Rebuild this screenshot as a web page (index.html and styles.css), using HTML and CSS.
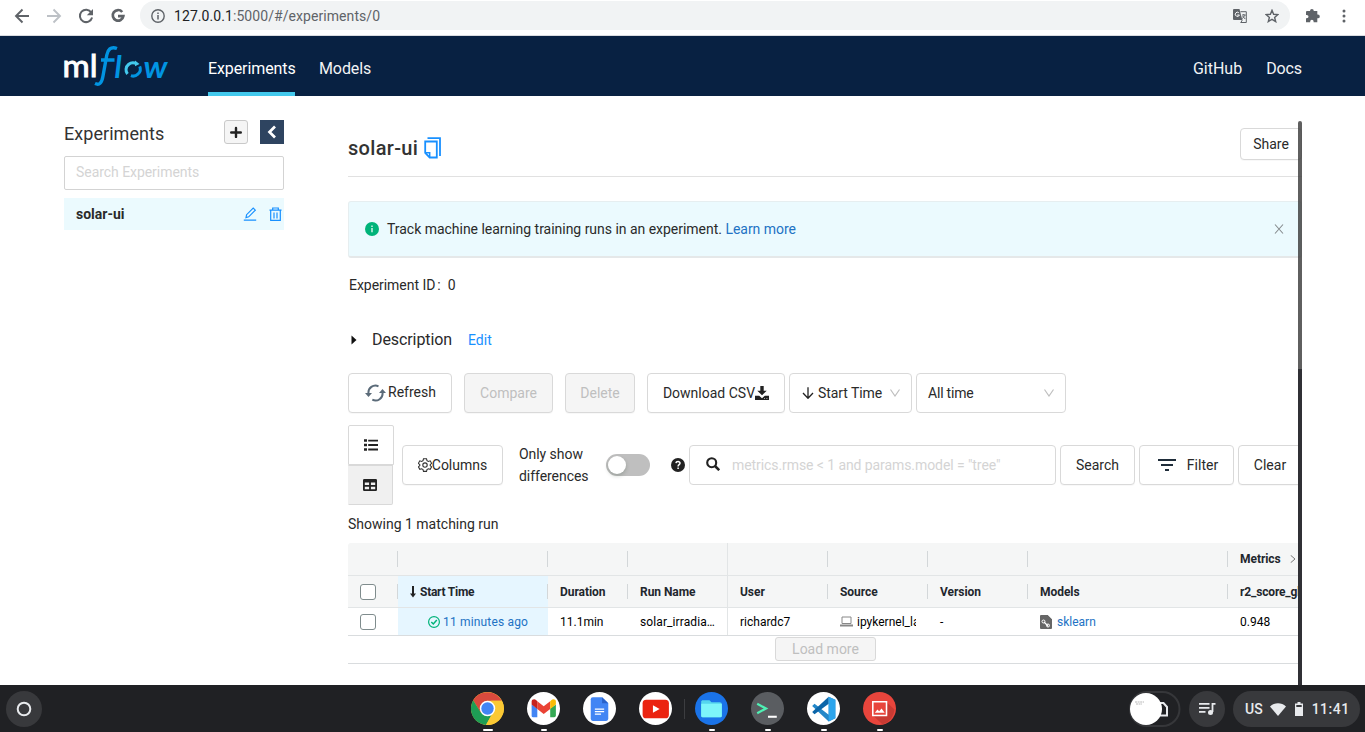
FILE: index.html
```html
<!DOCTYPE html>
<html lang="en">
<head>
<meta charset="utf-8">
<title>MLflow</title>
<link rel="stylesheet" href="styles.css">
</head>
<body>
<div class="browser">
  <svg class="ic" width="16" height="16" viewBox="0 0 16 16" fill="none" stroke="#5f6368" stroke-width="1.900"><path d="M15 8H2.500M8.500 1.500L2 8l6.500 6.500"/></svg>
  <svg class="ic" width="16" height="16" viewBox="0 0 16 16" fill="none" stroke="#bdc1c6" stroke-width="1.900"><path d="M1 8h12.500M7.500 1.500L14 8l-6.500 6.500"/></svg>
  <svg class="ic" width="16" height="16" viewBox="0 0 16 16"><path fill="none" stroke="#5f6368" stroke-width="2" d="M13.300 4.500A6.200 6.200 0 1 0 14.100 9.500"/><path fill="#5f6368" d="M15 1v6.200H8.800z"/></svg>
  <svg class="ic" width="16" height="16" viewBox="0 0 16 16" fill="none" stroke="#5f6368" stroke-width="2.700"><path d="M12.200 4A5.300 5.300 0 1 0 13.300 8.200H8"/></svg>
  <div class="omnibox">
    <svg width="14" height="14" viewBox="0 0 14 14"><circle cx="7" cy="7" r="6.200" fill="none" stroke="#5f6368" stroke-width="1.400"/><path d="M7 6v4.500M7 3.400v1.500" stroke="#5f6368" stroke-width="1.500"/></svg>
    <span class="url"><b>127.0.0.1</b>:5000/#/experiments/0</span>
    <svg width="14" height="14" viewBox="0 0 14 14"><path fill="#5f6368" d="M1 0h5.500l2.800 11H1a1 1 0 0 1-1-1V1a1 1 0 0 1 1-1z"/><path fill="none" stroke="#5f6368" d="M7.500 2.700h5.800v10.800H7.500M8 13.300l1.400-2.500"/><path fill="none" stroke="#fff" d="M5.800 3.700A2.100 2.100 0 1 0 6.400 6H4.300"/><path fill="none" stroke="#5f6368" d="M9 6h3.700M10.800 5v1M12 6.200L9.300 9.700M9.600 7l2.600 3"/></svg>
    <svg class="star" width="14" height="14" viewBox="0 0 14 14"><path fill="none" stroke="#5f6368" stroke-width="1.400" d="M7 1.300l1.600 4 4.300.3-3.300 2.800 1.100 4.200L7 10.300l-3.700 2.300 1.100-4.200L1.100 5.600l4.300-.3z"/></svg>
  </div>
  <svg class="puzzle" width="15" height="15" viewBox="0 0 15 15"><path fill="#5f6368" d="M1.500 3H5a1.900 1.900 0 1 1 3.800 0h3.500v3.500h.6a1.900 1.900 0 1 1 0 3.800h-.6v3.900H8.600v-.8a1.700 1.700 0 0 0-3.400 0v.8H1v-3.900h.8a1.700 1.700 0 0 0 0-3.400H1V4z"/></svg>
  <svg class="dots" width="4" height="14" viewBox="0 0 4 14" fill="#5f6368"><circle cx="2" cy="2" r="1.500"/><circle cx="2" cy="7" r="1.500"/><circle cx="2" cy="12" r="1.500"/></svg>
</div>

<header class="top">
  <svg class="logo" width="106" height="42" viewBox="0 0 106 42">
    <text class="ml" x="-1.500" y="32.300" textLength="35" lengthAdjust="spacingAndGlyphs">ml</text>
    <path fill="none" stroke="#0194e2" stroke-width="3.400" d="M53 3.500C46.500 1 43.800 5 42.800 10L39 31c-1.200 7-3.500 9.500-8 7.500M37 15h13.500"/>
    <text class="fl" x="50.500" y="32.500">l</text>
    <text class="fl" x="79.500" y="32.500" textLength="24" lengthAdjust="spacingAndGlyphs">w</text>
    <path fill="none" stroke="#43c9ed" stroke-width="3" d="M63.500 29a6.800 6.800 0 0 1 1-9.500 7 7 0 0 1 8-.7"/>
    <path fill="#43c9ed" d="M71 15.500l4.500 3.500-4.500 2.300z"/>
    <path fill="none" stroke="#0194e2" stroke-width="3" d="M75.700 21.300a6.800 6.800 0 0 1-1.800 7.900 7 7 0 0 1-7 1.500"/>
  </svg>
  <a class="nav active">Experiments</a>
  <a class="nav models">Models</a>
  <a class="nav gh">GitHub</a>
  <a class="nav docs">Docs</a>
</header>

<main class="main">
  <aside class="side">
    <div class="side-head">
      <h2>Experiments</h2>
      <span class="plus"><svg width="12" height="12" viewBox="0 0 12 12" stroke="#222" stroke-width="2.400" stroke-linecap="round"><path d="M6 2v9M1.200 6.500h9.600"/></svg></span>
      <span class="collapse"><svg width="10" height="14" viewBox="0 0 10 14" fill="none" stroke="#fff" stroke-width="2.700"><path d="M8 1.500L2.500 7 8 12.500"/></svg></span>
    </div>
    <div class="side-search">Search Experiments</div>
    <div class="side-item"><b>solar-ui</b>
      <svg width="14" height="14" viewBox="0 0 14 14" fill="none" stroke="#1890ff" stroke-width="1.200"><path d="M.8 13.200h12.400M3 10.600l.6-2.900 6.600-6.600 2.100 2.100-6.600 6.600z"/></svg>
      <svg class="trash" width="14" height="14" viewBox="0 0 14 14" fill="none" stroke="#1890ff" stroke-width="1.200"><path d="M.5 3.200h12M3.700 3V1h5.600v2M1.700 3.500v9.900h9.600V3.500M5 5.500v6M8 5.500v6"/></svg>
    </div>
  </aside>

  <section class="content">
    <div class="title-row">
      <h1>solar-ui</h1>
      <svg width="18" height="22" viewBox="0 0 18 22" fill="none" stroke="#1890ff" stroke-width="1.800"><path d="M3.500 1.200H16V19M1.200 4.500h11.600v16H5.700L1.200 16z"/><path stroke-width="1.500" d="M1.200 15.700h4.500v4.500"/></svg>
      <span class="btn share">Share</span>
    </div>

    <div class="alert">
      <svg width="14" height="14" viewBox="0 0 14 14"><circle cx="7" cy="7" r="7" fill="#00b379"/><path d="M7 6v4.300M7 3.600v1.400" stroke="#fff" stroke-width="1.200"/></svg>
      <span class="alert-text">Track machine learning training runs in an experiment. <a>Learn more</a></span>
      <svg class="close" width="10" height="10" viewBox="0 0 10 10" stroke="#858a8d" stroke-width="1.100"><path d="M1 .5l8 9M9 .5l-8 9"/></svg>
    </div>

    <div class="exp-id">Experiment ID<i>:</i>0</div>

    <div class="desc">
      <svg width="6" height="10" viewBox="0 0 6 10"><path d="M.5 .5L5.500 5l-5 4.500z" fill="#111"/></svg>
      <span class="desc-t">Description</span><a>Edit</a>
    </div>

    <div class="tools">
      <span class="btn big refresh"><svg width="21" height="18" viewBox="0 0 21 18" fill="none" stroke="#5b6b79" stroke-width="2"><path d="M3.500 9.500A7 7 0 0 1 13.500 2.300M17.500 8.500A7 7 0 0 1 7.300 15.700"/><path fill="#5b6b79" stroke="none" d="M0 9h7l-3.500 4zM14 9h7l-3.500-4z"/></svg>Refresh</span>
      <span class="btn big off compare">Compare</span>
      <span class="btn big off delete">Delete</span>
      <span class="btn big csv">Download CSV<svg width="14" height="14" viewBox="0 0 14 14" fill="#222"><path d="M5.300 0h3.400v4.800h3L7 9.300 2.300 4.800h3zM0 9.800h4.200L7 12.200l2.800-2.400H14V14H0z"/><path fill="#fff" d="M9.200 12.200h.8v.8h-.8zM11.500 12.200h.8v.8h-.8z"/></svg></span>
      <span class="sel sort"><svg width="12" height="12" viewBox="0 0 12 12" fill="none" stroke="#222" stroke-width="1.300"><path d="M6 .3v11M1 6l5 5.300L11 6"/></svg>Start Time<svg class="chev" width="10" height="8" viewBox="0 0 10 8" fill="none" stroke="#bfbfbf" stroke-width="1.200"><path d="M.5 .5L5 7 9.500.5"/></svg></span>
      <span class="sel time">All time<svg class="chev" width="10" height="8" viewBox="0 0 10 8" fill="none" stroke="#bfbfbf" stroke-width="1.200"><path d="M.5 .5L5 7 9.500.5"/></svg></span>
    </div>

    <div class="filters">
      <div class="views">
        <span class="view"><svg width="14" height="12" viewBox="0 0 14 12" fill="#222"><path d="M0 .3h3v2.500H0zM0 4.800h3v2.500H0zM0 9.300h3v2.500H0zM4.200.7H14v1.800H4.200zM4.200 5.100H14v1.800H4.200zM4.200 9.600H14v1.800H4.200z"/></svg></span>
        <span class="view on"><svg width="14" height="12" viewBox="0 0 14 12"><path fill="#222" fill-rule="evenodd" d="M1.200 0h11.600A1.200 1.200 0 0 1 14 1.200v9.600a1.200 1.200 0 0 1-1.200 1.200H1.200A1.200 1.200 0 0 1 0 10.800V1.200A1.200 1.200 0 0 1 1.200 0zM1.800 3.500v2.400h4.300V3.500zm6.100 0v2.400h4.300V3.500zM1.800 7.700v2.500h4.300V7.700zm6.100 0v2.500h4.300V7.700z"/></svg></span>
      </div>
      <span class="btn big columns"><svg width="14" height="14" viewBox="0 0 14 14" fill="none" stroke="#333" stroke-width="1.100"><path d="M5.500.8h3l.5 1.900 1.300.7 1.900-.6 1.400 2.500L12.200 6.700v.9l1.400 1.300-1.400 2.400-1.900-.5-1.300.7-.5 1.900h-3L5 11.500l-1.300-.7-1.900.5L.4 8.900l1.400-1.300v-.9L.4 5.300l1.400-2.500 1.900.6L5 2.700z"/><circle cx="7" cy="7.100" r="2.200"/></svg>Columns</span>
      <span class="only">Only show differences</span>
      <span class="switch"></span>
      <svg class="help" width="14" height="14" viewBox="0 0 14 14"><circle cx="7" cy="7" r="7" fill="#222"/><path fill="none" stroke="#fff" stroke-width="1.500" d="M4.900 5.200C5.200 3 9.200 3.100 9 5.300 8.900 6.700 7.100 6.600 7.100 8.400M7.100 9.500v1.500"/></svg>
      <span class="query"><svg width="14" height="14" viewBox="0 0 14 14" fill="none" stroke="#222" stroke-width="2.100"><circle cx="5.700" cy="5.700" r="4.500"/><path stroke-width="2.500" d="M9 9l4.200 4.200"/></svg>metrics.rmse &lt; 1 and params.model = "tree"</span>
      <span class="btn big search">Search</span>
      <span class="btn big filter"><svg width="18" height="12" viewBox="0 0 18 12" fill="#1f2d3a"><path d="M0 0h18v2H0zM3 5h12v2H3zM7 10h4v2H7z"/></svg>Filter</span>
      <span class="btn big clear">Clear</span>
    </div>

    <div class="showing">Showing 1 matching run</div>

    <div class="grid">
      <div class="row g1"><span class="c50"></span><span class="c150"></span><span class="c80"></span><span class="c100 pin"></span><span class="c100"></span><span class="c100"></span><span class="c100"></span><span class="c200"></span><span class="last">Metrics<svg width="6" height="8" viewBox="0 0 6 8" fill="none" stroke="#777"><path d="M.7.3L5 4 .7 7.700"/></svg></span></div>
      <div class="row g2"><span class="c50"><i class="box"></i></span><span class="c150 hot"><svg width="6" height="12" viewBox="0 0 6 12"><path fill="#222" d="M2 0h2v7.500h2L3 11.500 0 7.500h2z"/></svg>Start Time</span><span class="c80">Duration</span><span class="c100 pin">Run Name</span><span class="c100">User</span><span class="c100">Source</span><span class="c100">Version</span><span class="c200">Models</span><span class="last">r2_score_gb</span></div>
      <div class="row g3"><span class="c50"><i class="box"></i></span><span class="c150 hot"><svg width="12" height="12" viewBox="0 0 12 12" fill="none" stroke="#00b379" stroke-width="1.200"><circle cx="6" cy="6" r="5.400"/><path stroke-width="1.500" d="M3.300 6l2 2 3.500-4"/></svg><a>11 minutes ago</a></span><span class="c80">11.1min</span><span class="c100 pin">solar_irradia…</span><span class="c100">richardc7</span><span class="c100 src"><svg width="13" height="11" viewBox="0 0 13 11" fill="none" stroke="#888"><path d="M2 1h9v6.500H2z"/><path stroke-width="2" d="M0 9.500h13"/></svg><em>ipykernel_la</em></span><span class="c100">-</span><span class="c200 model"><svg width="12" height="14" viewBox="0 0 12 14"><path fill="#666" d="M1 0h7l4 4v9a1 1 0 0 1-1 1H1a1 1 0 0 1-1-1V1a1 1 0 0 1 1-1z"/><path fill="#fff" d="M8 0h4v4z"/><path fill="none" stroke="#fff" stroke-width="1.200" d="M4 7l4 4"/><circle cx="3.500" cy="6.500" r="1.500" fill="none" stroke="#fff"/><circle cx="8" cy="10.500" r="1.500" fill="none" stroke="#fff"/></svg><a>sklearn</a></span><span class="last">0.948</span></div>
      <div class="more"><span>Load more</span></div>
    </div>
  </section>
  <div class="scrollbar"></div>
</main>

<footer class="shelf">
  <span class="launcher"><svg width="16" height="16" viewBox="0 0 16 16"><circle cx="8" cy="8" r="6.300" fill="none" stroke="#e8eaed" stroke-width="2"/></svg></span>
  <div class="apps">
    <span class="app wide"><svg viewBox="0 0 32 32"><circle cx="16" cy="16" r="16" fill="#fbc934"/><path fill="#d94a3d" d="M2.100 8A16 16 0 0 1 29.900 8.500H16L9.500 20z"/><path fill="#1e9d55" d="M2.100 8A16 16 0 0 0 14.500 32l7-12.500L9.500 19.800z"/><path fill="#fbc934" d="M29.900 8.500A16 16 0 0 1 14.500 32l8-14-3-9.500z"/><circle cx="16" cy="16" r="7.500" fill="#fff"/><circle cx="16" cy="16" r="6" fill="#4285f4"/></svg></span>
    <span class="app"><svg viewBox="0 0 32 32"><circle cx="16" cy="16" r="16" fill="#fff"/><path fill="#4285f4" d="M4.500 12l5.500 4v8.500H6a1.500 1.500 0 0 1-1.500-1.500z"/><path fill="#34a853" d="M28 12l-5.500 4v8.500H26a2 2 0 0 0 2-1.500z"/><path fill="#ea4335" d="M10 9l6.200 4.800L22.500 9v7.500l-6.300 4.800L10 16.500z"/><path fill="#c5221f" d="M4.500 12V9.500c0-2.600 3-3 4.500-1.500l1 1v7.500z"/><path fill="#fbbc04" d="M28 12V9.500c0-2.600-3-3-4.500-1.500l-1 1v7.500z"/></svg></span>
    <span class="app nodot"><svg viewBox="0 0 32 32"><circle cx="16" cy="16" r="16" fill="#fff"/><path fill="#4285f4" d="M9.500 5h9l6 6v15a2 2 0 0 1-2 2H9.500a2 2 0 0 1-2-2V7a2 2 0 0 1 2-2z"/><path fill="#2a62c9" d="M18.500 5v6h6z"/><path stroke="#fff" stroke-width="1.200" d="M11.500 16.500h9M11.500 19h9M11.500 21.500h6"/></svg></span>
    <span class="app nodot"><svg viewBox="0 0 32 32"><circle cx="16" cy="16" r="16" fill="#fff"/><rect x="3.500" y="7.500" width="25.500" height="18" rx="3.500" fill="#eb2310"/><path fill="#fff" d="M13.500 12.800v7.200l6.500-3.600z"/></svg></span>
    <i class="sep"></i>
    <span class="app"><svg viewBox="0 0 32 32"><circle cx="16" cy="16" r="16" fill="#1a73e8"/><path fill="#55d5ee" d="M7 8h7l2 2h8a2 2 0 0 1 2 2v11a1.500 1.500 0 0 1-1.500 1.500h-17A1.500 1.500 0 0 1 6 23V9z"/><path fill="#7df5fa" d="M6 11.500h20V23a1.500 1.500 0 0 1-1.500 1.500h-17A1.500 1.500 0 0 1 6 23z"/></svg></span>
    <span class="app"><svg viewBox="0 0 32 32"><circle cx="16" cy="16" r="16" fill="#5a5d61"/><path fill="none" stroke="#4ff0b4" stroke-width="2.200" d="M6 11.500l8.500 4.500L6 20.500"/><path stroke="#fff" stroke-width="2" d="M16.500 24H25"/></svg></span>
    <span class="app"><svg viewBox="0 0 32 32"><circle cx="16" cy="16" r="16" fill="#fff"/><path fill="#2387c9" d="M21 4.500l6.500 3v18L21 28.500 5 13.500l2.300-2L21 22z"/><path fill="#0b65a9" d="M21 4.500L5 19.500l2.300 2L21 11.500z"/><path fill="#2ca5ed" d="M21 4.500l6.500 3v18L21 28.500z"/></svg></span>
    <span class="app"><svg viewBox="0 0 32 32"><circle cx="16" cy="16" r="16" fill="#e8453c"/><path fill="#c83a33" d="M23 10l7.500 7A16 16 0 0 1 19 31.500l-9-8.500z"/><path fill="#e8453c" d="M9 9h14v14H9z"/><path fill="none" stroke="#fff" stroke-width="1.500" d="M9.500 9.500h13.300v13.300H9.500z"/><path fill="#fff" d="M11.500 20l2.500-3 1.700 1.700 2.300-2.700 3 4z"/></svg></span>
  </div>
  <div class="tote"><svg width="52" height="36" viewBox="0 0 52 36"><rect x="1" y="1" width="49.500" height="34" rx="17" fill="#202124" stroke="#36373a" stroke-width="2"/><path fill="none" stroke="#e8eaed" stroke-width="2" d="M30 12h4.500l3.500 4v8.500h-8z"/><circle cx="17" cy="18" r="16" fill="#fff"/><path stroke="#999" stroke-width=".7" d="M6 11h9M7 13h6" stroke-dasharray="2 .6"/></svg></div>
  <span class="music"><svg width="17" height="14" viewBox="0 0 17 14"><path stroke="#e8eaed" stroke-width="1.800" d="M0 1.900h10.500M0 5.900h10.500M0 9.900h6.500"/><path fill="none" stroke="#e8eaed" stroke-width="1.800" d="M16.500 1.900h-3V10"/><circle cx="11.500" cy="10.500" r="2.500" fill="#e8eaed"/></svg></span>
  <div class="status"><span>US</span><svg width="16" height="13" viewBox="0 0 16 13"><path fill="#e8eaed" d="M0 3.500C4.500-.8 11.500-.8 16 3.500L8 13z"/></svg><svg class="bat" width="8" height="14" viewBox="0 0 8 14"><path fill="#e8eaed" d="M2.500 0h3v1.500H8V14H0V1.500h2.500z"/><path fill="#38393c" d="M1.300 3h5.400v2H1.300z"/></svg><span class="clock">11:41</span></div>
</footer>
</body>
</html>
```
FILE: styles.css
```css
* { box-sizing: border-box; }
body { margin: 0; width: 1365px; height: 732px; overflow: hidden; display: flex; flex-direction: column; background: #fff; color: #2a2a2a; font: 14px/22px Roboto, "Liberation Sans", sans-serif; }
svg { display: block; flex: none; }
i, em { font-style: normal; }
h1, h2 { margin: 0; }
a { color: #1890ff; }

.browser { height: 36px; flex: none; display: flex; align-items: center; padding: 0 18px 4px 14px; border-bottom: 1px solid #dadce0; }
.ic { margin-right: 16px; }
.omnibox { flex: none; width: 1150px; height: 29px; margin-left: -2px; border-radius: 15px; background: #f1f3f4; display: flex; align-items: center; padding: 0 11px; }
.url { flex: 1; margin-left: 9px; font-size: 14px; letter-spacing: .07px; color: #5f6368; }
.url b { font-weight: 400; color: #202124; }
.star { margin-left: 18px; }
.puzzle { margin-left: 15px; }
.dots { margin-left: 22px; }

.top { height: 60px; flex: none; background: #082142; display: flex; align-items: stretch; padding: 0 63px 0 64px; }
.logo { margin: 9px 38px 0 0; overflow: visible; }
.ml { font: 400 30px Lato, sans-serif; fill: #fff; stroke: #fff; stroke-width: .9px; }
.fl { font: italic 700 30px Lato, sans-serif; fill: #0194e2; }
.nav { height: 60px; font-size: 16px; line-height: 66px; letter-spacing: -.1px; color: #fff; opacity: .95; }
.active { width: 87px; border-bottom: 4px solid #43c9ed; opacity: 1; }
.models { margin-left: 24px; }
.gh { margin-left: auto; letter-spacing: 0; }
.docs { margin-left: 24px; }

.main { position: relative; flex: none; height: 589px; display: flex; overflow: hidden; }
.side { width: 220px; margin: 24px 64px 0; flex: none; }
.side-head { display: flex; height: 24px; }
.side-head h2 { flex: 1; font-size: 18px; font-weight: 400; line-height: 28px; letter-spacing: .05px; color: #333; }
.plus { width: 24px; height: 24px; border: 1px solid #c9c9c9; border-radius: 3px; background: #f5f5f5; display: grid; place-items: center; }
.collapse { width: 24px; height: 24px; margin-left: 12px; background: #2e4460; display: grid; place-items: center; }
.side-search { margin-top: 12px; height: 34px; border: 1px solid #d3d3d3; border-radius: 2px; padding: 0 11px; line-height: 31px; letter-spacing: -.05px; color: #d4d4d4; }
.side-item { margin-top: 8px; height: 32px; background: #ebfafe; display: flex; align-items: center; padding: 0 1px 0 12px; }
.side-item b { flex: 1; font-weight: 700; }
.trash { margin-left: 12px; }

.content { width: 954px; height: 564px; margin-top: 25px; overflow: hidden; display: flex; flex-direction: column; }
.content > * { flex: none; }
.title-row { height: 56px; border-bottom: 1px solid #e1e1e1; display: flex; align-items: center; gap: 6px; }
.title-row h1 { font-size: 20px; font-weight: 500; line-height: 30px; letter-spacing: .32px; margin-top: -2px; color: #333; }
.title-row svg { margin-top: -2px; }
.btn { border: 1px solid #d9d9d9; border-radius: 4px; background: #fff; height: 32px; display: flex; align-items: center; justify-content: center; white-space: nowrap; flex: none; box-shadow: 0 1px 1px rgba(0,0,0,.03); }
.big { height: 40px; }
.share { width: 62px; margin-left: auto; margin-top: -10px; }

.alert { margin-top: 24px; height: 57px; width: 954px; background: #ebfafe; border: 1px solid #e6eef0; border-bottom: 2px solid #e5e8e9; border-radius: 3px; display: flex; align-items: center; padding: 0 17px 0 16px; }
.alert-text { flex: 1; margin-left: 8px; letter-spacing: -.025px; }
.alert-text a, .g3 a { color: #2272c4; }

.exp-id { margin-top: 16px; padding-left: 1px; letter-spacing: -.04px; }
.exp-id i { margin: 0 7px 0 2px; }
.desc { margin-top: 33px; height: 22px; display: flex; align-items: center; padding-left: 3px; }
.desc-t { margin: 0 16px 0 15px; font-size: 16px; letter-spacing: -.09px; }
.tools { margin-top: 22px; height: 40px; display: flex; }
.refresh { width: 104px; margin-right: 12px; gap: 2px; padding: 0 0 2px 1px; }
.refresh svg { margin-top: 2px; }
.compare { width: 89px; margin-right: 12px; }
.delete { width: 70px; margin-right: 12px; }
.csv { width: 138px; }
.off { background: #f5f5f5; color: #bfbfbf; }
.sel { height: 40px; margin-left: 4px; border: 1px solid #d9d9d9; border-radius: 4px; display: flex; align-items: center; padding: 0 11px; }
.chev { margin-left: auto; }
.sort { width: 123px; gap: 4px; padding-left: 12px; letter-spacing: -.07px; }
.time { width: 150px; letter-spacing: -.2px; }

.filters { margin-top: 12px; height: 80px; display: flex; align-items: center; }
.views { width: 46px; margin-right: 8px; }
.view { height: 40px; width: 46px; border: 1px solid #d9d9d9; display: grid; place-items: center; border-radius: 2px 2px 0 0; }
.on { width: 45px; background: #f0f0f0; border-left-color: #f0f0f0; border-radius: 0 0 2px 0; padding-right: 1px; }
.columns { width: 101px; }
.only { width: 71px; flex: none; margin-left: 16px; letter-spacing: -.05px; }
.switch { width: 44px; height: 22px; margin: 0 21px 0 16px; border-radius: 11px; background: #bfbfbf; padding: 2px; flex: none; }
.switch::before { content: ""; display: block; width: 18px; height: 18px; border-radius: 9px; background: #fff; box-shadow: 0 2px 4px rgba(0,35,11,.2); }
.query { width: 367px; height: 40px; margin-left: 4px; border: 1px solid #d9d9d9; border-radius: 4px; display: flex; align-items: center; gap: 12px; padding-left: 16px; color: #d4d4d4; flex: none; letter-spacing: -.08px; white-space: nowrap; }
.query svg { margin-top: -2px; }
.search { width: 75px; margin-left: 4px; }
.filter { width: 95px; margin-left: 4px; gap: 11px; padding-left: 3px; }
.clear { width: 74px; margin-left: 4px; padding-right: 10px; }
.showing { margin-top: 8px; }

.grid { margin-top: 8px; font-size: 12px; width: 954px; }
.row { display: flex; height: 33px; overflow: hidden; }
.row > span { flex: none; display: flex; align-items: center; padding-left: 12px; position: relative; white-space: nowrap; }
.c50 { width: 50px; } .c80 { width: 80px; } .c100 { width: 100px; } .c150 { width: 150px; } .c200 { width: 200px; }
.last { width: 100px; }
.g1, .g2 { background: #f5f6f6; border-bottom: 1px solid #e2e5e6; font-weight: 700; letter-spacing: -.05px; color: #1f272d; }
.g1 { border-radius: 3px 3px 0 0; }
.g2 { height: 32px; }
.g1 > span::after, .g2 > span::after { content: ""; position: absolute; right: 0; top: 8px; bottom: 8px; width: 1px; background: #d3d7d9; }
.row > .pin { border-right: 1px solid #e2e5e6; }
.g1 > .pin::after, .g2 > .pin::after { display: none; }
.g1 .last svg { margin-left: 9px; }
.g2 .last { letter-spacing: -.15px; }
.g2 .hot { letter-spacing: -.25px; }
.g2 .hot svg { margin-right: 4px; }
.hot { background: #e6f6ff; }
.g3 { height: 28px; border-bottom: 1px solid #d9dcde; color: #000; }
.row.g3 > .hot { padding-left: 30px; gap: 3px; }
.g3 .hot a { letter-spacing: .17px; }
.g3 .pin { letter-spacing: .1px; }
.box { width: 16px; height: 16px; border: 1px solid #7f8c8d; border-radius: 3px; background: #fff; }
.row > .src { gap: 4px; padding-right: 12px; }
.src em { overflow: hidden; }
.row > .model { gap: 5px; }
.more { height: 28px; border-bottom: 1px solid #d9dcde; display: flex; justify-content: center; padding-top: 1px; }
.more span { width: 101px; height: 24px; border: 1px solid #d9d9d9; border-radius: 3px; background: #f5f5f5; color: #bfbfbf; font-size: 14px; line-height: 23px; text-align: center; padding-left: 1px; }
.scrollbar { position: absolute; left: 1298px; top: 25px; width: 4px; height: 564px; border-radius: 2px 2px 0 0; background: linear-gradient(rgba(60,60,60,.82) 248px, #303035 248px); }

.shelf { height: 47px; flex: none; background: #202124; display: flex; padding: 6px 5px 0 6px; }
.launcher, .music { width: 36px; height: 36px; border-radius: 18px; background: #38393c; display: grid; place-items: center; flex: none; }
.apps { margin-left: 429px; display: flex; gap: 22px; height: 41px; padding-top: 1px; }
.app { width: 34px; display: flex; flex-direction: column; align-items: center; }
.app svg { width: 33px; height: 33px; margin-left: -1px; }
.app::after { content: ""; width: 6px; height: 2px; margin-top: 4px; border-radius: 1px; background: #fff; }
.wide::after { width: 10px; }
.nodot::after { display: none; }
.sep { width: 1px; height: 20px; margin: 7px -12px 0 -11px; background: #3c3d40; }
.tote { margin-left: auto; width: 52px; }
.music { margin-left: 8px; }
.status { width: 127px; height: 36px; margin-left: 8px; border-radius: 18px; background: #38393c; color: #e8eaed; font-weight: 500; display: flex; align-items: center; padding-left: 12px; }
.status svg { margin-left: 7px; }
.status .bat { margin-left: 9px; }
.clock { margin-left: 9px; letter-spacing: .5px; }
```
